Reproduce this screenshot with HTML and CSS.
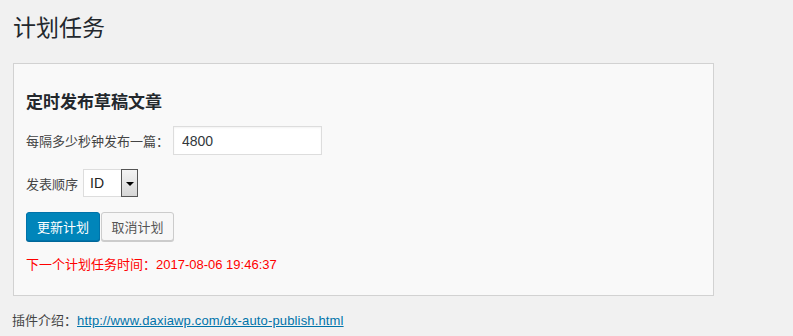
FILE: index.html
```html
<!DOCTYPE html>
<html lang="zh">
<head>
<meta charset="utf-8">
<link rel="stylesheet" href="styles.css">
</head>
<body>
<div class="wrap">
  <h1 class="title">计划任务</h1>
  <div class="panel">
    <h2 class="panel-title">定时发布草稿文章</h2>
    <div class="row">
      <label class="label">每隔多少秒钟发布一篇：</label>
      <input class="text-input" type="text" value="4800">
    </div>
    <div class="row row-select">
      <label class="label">发表顺序</label>
      <div class="select">
        <span class="select-value">ID</span>
        <span class="select-btn"><span class="arrow"></span></span>
      </div>
    </div>
    <div class="buttons">
      <button class="btn btn-primary">更新计划</button>
      <button class="btn btn-secondary">取消计划</button>
    </div>
    <p class="next-time">下一个计划任务时间：2017-08-06 19:46:37</p>
  </div>
  <p class="footer">插件介绍：<a class="link" href="#">http://www.daxiawp.com/dx-auto-publish.html</a></p>
</div>
</body>
</html>
```
FILE: styles.css
```css
html, body {
  margin: 0;
  padding: 0;
  background: #f1f1f1;
}
body {
  font-family: "Liberation Sans", "Noto Sans CJK SC", sans-serif;
  font-size: 13px;
  color: #444;
}
.wrap {
  padding: 10px 0 0 13px;
}
.title {
  margin: 0;
  font-weight: 400;
  font-size: 23px;
  line-height: 32px;
  color: #23282d;
  font-family: "Noto Sans CJK SC", sans-serif;
}
.panel {
  margin-top: 21px;
  height: 231px;
  box-sizing: content-box;
  border: 1px solid #d2d2d2;
  background: #f9f9f9;
  padding: 0 0 0 12px;
  width: 687px;
}
.panel-title {
  margin: 25px 0 0 0;
  font-size: 17px;
  line-height: 24px;
  font-weight: 700;
  color: #23282d;
  font-family: "Noto Sans CJK SC", sans-serif;
}
.row {
  display: flex;
  align-items: center;
  margin-top: 13px;
}
.label {
  font-size: 13px;
  color: #444;
}
.text-input {
  margin-left: 4px;
  width: 149px;
  height: 29px;
  box-sizing: border-box;
  border: 1px solid #ddd;
  background: #fff;
  padding: 0 8px;
  font-family: "Liberation Sans", sans-serif;
  font-size: 14px;
  color: #32373c;
  box-shadow: inset 0 1px 2px rgba(0,0,0,0.05);
  outline: none;
}
.row-select {
  margin-top: 14px;
}
.select {
  margin-left: 5px;
  display: flex;
  width: 55px;
  height: 28px;
  box-sizing: border-box;
  border: 1px solid #ddd;
  background: #fff;
}
.select-value {
  flex: 1;
  padding-left: 6px;
  font-family: "Liberation Sans", sans-serif;
  font-size: 14px;
  line-height: 26px;
  color: #222;
}
.select-btn {
  width: 15px;
  margin: -1px -1px -1px 0;
  border: 1px solid #555;
  background: linear-gradient(#f4f4f4, #d6d6d6);
  display: flex;
  align-items: center;
  justify-content: center;
}
.arrow {
  width: 0;
  height: 0;
  border-left: 4px solid transparent;
  border-right: 4px solid transparent;
  border-top: 4px solid #000;
  margin-top: 1px;
}
.buttons {
  display: flex;
  margin-top: 15px;
  gap: 1px;
}
.btn {
  height: 29px;
  padding: 0;
  font-family: "Noto Sans CJK SC", sans-serif;
  font-size: 13px;
  border-radius: 3px;
  box-sizing: border-box;
  cursor: pointer;
  white-space: nowrap;
}
.btn-primary {
  width: 74px;
  background: #0085ba;
  border: 1px solid #0073aa;
  color: #fff;
  box-shadow: 0 1px 0 #006799;
}
.btn-secondary {
  width: 73px;
  background: #f7f7f7;
  border: 1px solid #ccc;
  color: #555;
  box-shadow: 0 1px 0 #ccc;
}
.next-time {
  margin: 15px 0 0 0;
  color: #ff0000;
  font-size: 13px;
  line-height: 18px;
}
.footer {
  margin: 14px 0 0 -1px;
  font-size: 13px;
  color: #444;
}
.link {
  color: #0073aa;
  text-decoration: underline;
  letter-spacing: 0.15px;
}
```
